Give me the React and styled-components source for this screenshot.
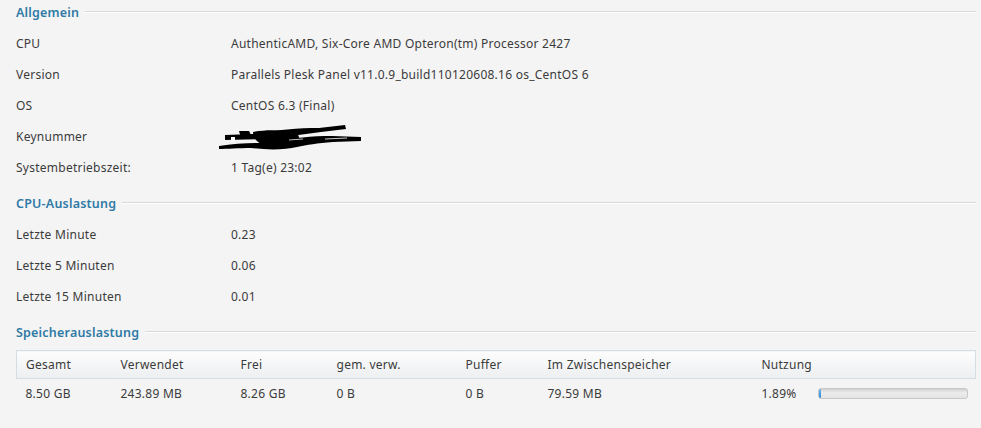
import React from 'react';
import styled, { createGlobalStyle } from 'styled-components';

const GlobalStyle = createGlobalStyle`
  html, body {
    margin: 0;
    padding: 0;
    background: #f4f4f4;
  }
  body {
    font-family: "Noto Sans", "Open Sans", sans-serif;
    font-size: 12px;
    letter-spacing: 0.25px;
    color: #3b3b3b;
  }
`;

const general = [
  ['CPU', 'AuthenticAMD, Six-Core AMD Opteron(tm) Processor 2427'],
  ['Version', 'Parallels Plesk Panel v11.0.9_build110120608.16 os_CentOS 6'],
  ['OS', 'CentOS 6.3 (Final)'],
  ['Keynummer', null],
  ['Systembetriebszeit:', '1 Tag(e) 23:02'],
];

const cpuLoad = [
  ['Letzte Minute', '0.23'],
  ['Letzte 5 Minuten', '0.06'],
  ['Letzte 15 Minuten', '0.01'],
];

const memCols = [
  { title: 'Gesamt', value: '8.50 GB', width: 95 },
  { title: 'Verwendet', value: '243.89 MB', width: 120 },
  { title: 'Frei', value: '8.26 GB', width: 96 },
  { title: 'gem. verw.', value: '0 B', width: 129 },
  { title: 'Puffer', value: '0 B', width: 82 },
  { title: 'Im Zwischenspeicher', value: '79.59 MB', width: 214 },
];

function Redacted() {
  return (
    <svg width="146" height="26" viewBox="0 0 146 26">
      <path d="M2 21 C15 19 30 18 42 18 L60 16 C75 13 95 11 115 11 L144 12 L144 16 L116 17 C100 18 90 20 80 22 C68 25 50 25 34 23 C22 23 10 24 2 24 Z" fill="#000" />
      <path d="M8 10 L36 9 C58 5 82 3 102 3 L128 0 L129 4 L104 7 C84 10 64 12 44 14 L8 15 Z" fill="#000" />
      <path d="M22 6 L32 6 L35 12 L24 13 Z" fill="#000" />
      <path d="M36 7 C52 4 68 5 80 9 C86 14 78 22 60 22 C46 22 36 17 36 7 Z" fill="#000" />
      <rect x="14" y="12" width="4" height="4" fill="#fff" />
      <path d="M72 15 L86 14" stroke="#bbb" strokeWidth="1" />
      <path d="M108 14 L130 13" stroke="#ccc" strokeWidth="1" />
    </svg>
  );
}

export default function App() {
  return (
    <>
      <GlobalStyle />
      <Page>
        <Section>
          <SectionHeader>
            <SectionTitle>Allgemein</SectionTitle>
            <Rule />
          </SectionHeader>
          <Rows>
            {general.map(([label, value]) => (
              <Row key={label}>
                <Label>{label}</Label>
                {value === null ? (
                  <Value $redacted>
                    <Redacted />
                  </Value>
                ) : (
                  <Value>{value}</Value>
                )}
              </Row>
            ))}
          </Rows>
        </Section>

        <Section>
          <SectionHeader>
            <SectionTitle>CPU-Auslastung</SectionTitle>
            <Rule />
          </SectionHeader>
          <Rows>
            {cpuLoad.map(([label, value]) => (
              <Row key={label}>
                <Label>{label}</Label>
                <Value>{value}</Value>
              </Row>
            ))}
          </Rows>
        </Section>

        <Section>
          <SectionHeader>
            <SectionTitle>Speicherauslastung</SectionTitle>
            <Rule />
          </SectionHeader>
          <Table>
            <colgroup>
              {memCols.map((c) => (
                <col key={c.title} style={{ width: c.width }} />
              ))}
              <col />
            </colgroup>
            <thead>
              <tr>
                {memCols.map((c) => (
                  <Th key={c.title}>{c.title}</Th>
                ))}
                <Th>Nutzung</Th>
              </tr>
            </thead>
            <tbody>
              <tr>
                {memCols.map((c) => (
                  <Td key={c.title}>{c.value}</Td>
                ))}
                <Td>
                  <Usage>
                    <Percent>1.89%</Percent>
                    <Bar>
                      <BarFill style={{ width: '1.89%' }} />
                    </Bar>
                  </Usage>
                </Td>
              </tr>
            </tbody>
          </Table>
        </Section>
      </Page>
    </>
  );
}

const Page = styled.div`
  padding: 0 5px 0 16px;
`;

const Section = styled.section`
  & + & {
    margin-top: 8px;
  }
`;

const SectionHeader = styled.div`
  display: flex;
  align-items: center;
  height: 24px;
`;

const SectionTitle = styled.h3`
  margin: 0 6px 0 0;
  font-size: 12.5px;
  font-weight: 600;
  letter-spacing: 0.2px;
  color: #2f7aa6;
  white-space: nowrap;
`;

const Rule = styled.div`
  flex: 1;
  border-top: 1px solid #d9d9d9;
  border-bottom: 1px solid #ffffff;
`;

const Rows = styled.div`
  padding-top: 4px;
`;

const Row = styled.div`
  display: flex;
  align-items: center;
  height: 31px;
`;

const Label = styled.div`
  width: 215px;
  flex-shrink: 0;
`;

const Value = styled.div`
  display: flex;
  align-items: center;
  height: 31px;
  margin-left: ${(p) => (p.$redacted ? '-14px' : '0')};
  padding-top: ${(p) => (p.$redacted ? '3px' : '0')};
`;

const Table = styled.table`
  width: 100%;
  margin-top: 6px;
  border-collapse: collapse;
  table-layout: fixed;
`;

const Th = styled.th`
  box-sizing: border-box;
  height: 28px;
  padding: 0 0 0 9px;
  text-align: left;
  font-weight: normal;
  color: #3b3b3b;
  background: linear-gradient(#fdfdfd, #eceef0);
  border-top: 1px solid #d6dde2;
  border-bottom: 1px solid #d6dde2;
  &:first-child {
    border-left: 1px solid #d6dde2;
  }
  &:last-child {
    border-right: 1px solid #d6dde2;
  }
`;

const Td = styled.td`
  box-sizing: border-box;
  height: 29px;
  padding: 0 0 0 9px;
  text-align: left;
`;

const Usage = styled.div`
  display: flex;
  align-items: center;
`;

const Percent = styled.span`
  width: 56px;
`;

const Bar = styled.div`
  width: 148px;
  height: 9px;
  border: 1px solid #c8c8c8;
  border-radius: 3px;
  background: linear-gradient(#d0d0d0, #ececec 40%, #e4e4e4);
  overflow: hidden;
  display: flex;
`;

const BarFill = styled.div`
  min-width: 2px;
  background: linear-gradient(#6ab8ef, #2a8ad8);
`;
